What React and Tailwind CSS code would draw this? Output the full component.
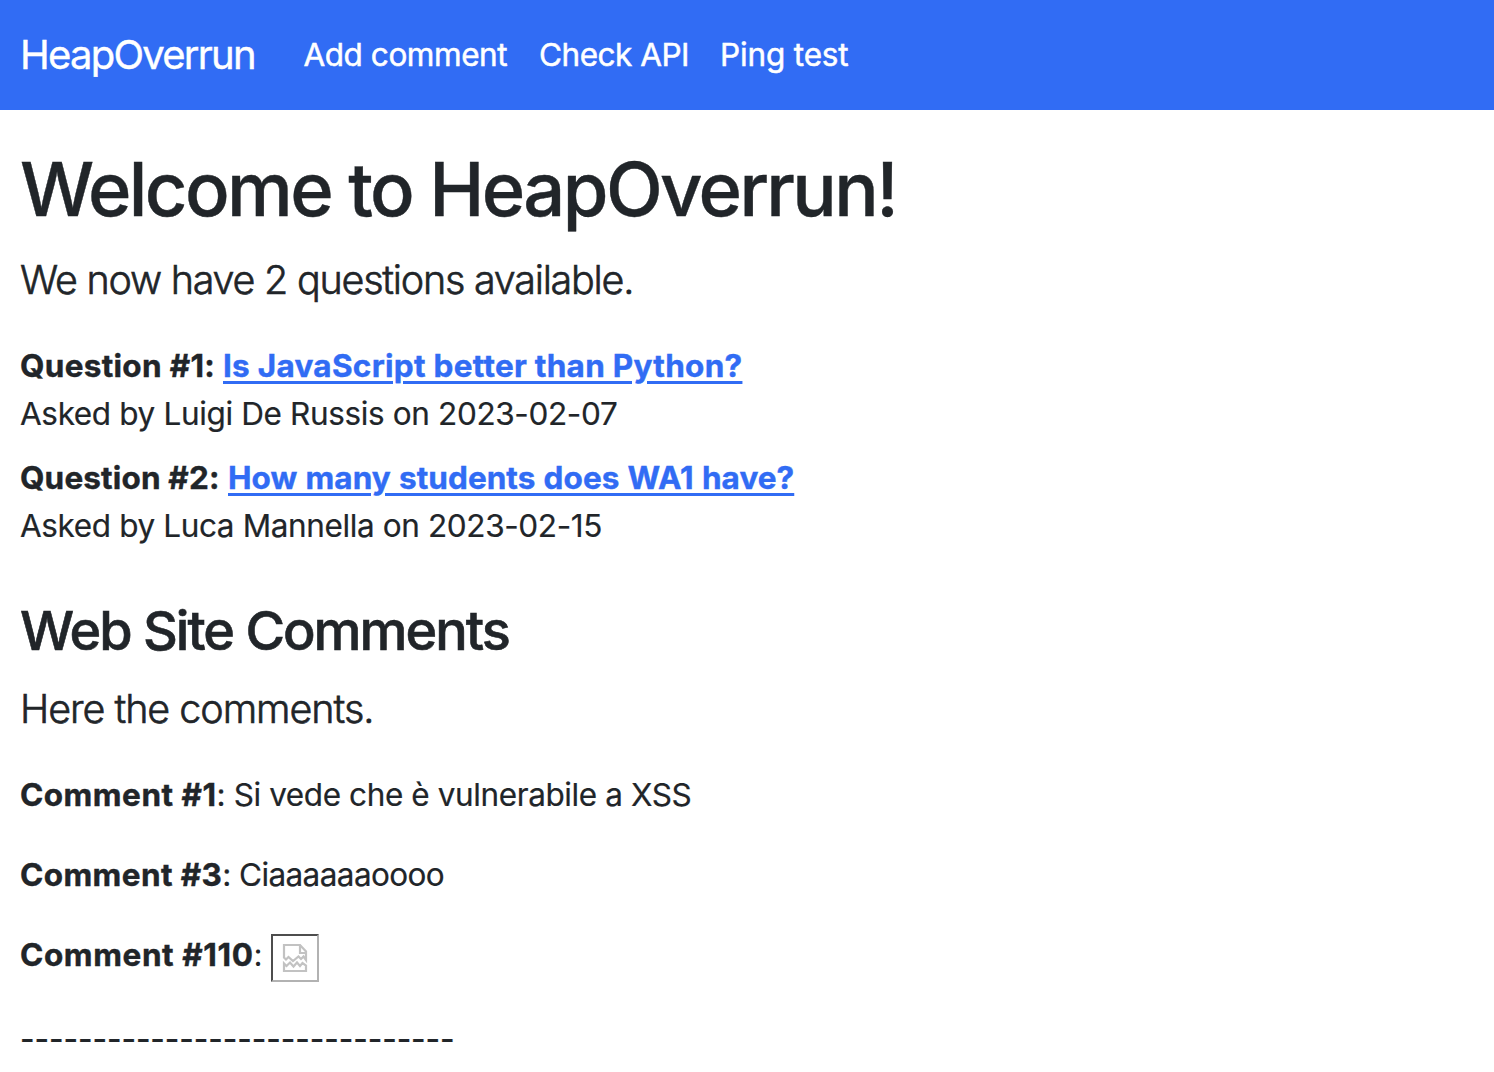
function NavLink({ className = "", children }) {
  return (
    <a href="#" className={"whitespace-nowrap [-webkit-text-stroke:0.5px_currentColor] " + className}>
      {children}
    </a>
  );
}

function Question({ label, labelClass = "", title, titleClass = "", asked, askedClass = "" }) {
  return (
    <li>
      <div className="flex font-bold [-webkit-text-stroke:0.4px_currentColor]">
        <span className={"whitespace-nowrap " + labelClass}>{label}</span>
        <a
          href="#"
          className={
            "whitespace-nowrap text-[#316cf4] underline decoration-[3px] underline-offset-[4px] " + titleClass
          }
        >
          {title}
        </a>
      </div>
      <p className={"whitespace-nowrap [-webkit-text-stroke:0.2px_currentColor] " + askedClass}>{asked}</p>
    </li>
  );
}

function CommentLabel({ className = "", children }) {
  return <b className={"font-bold [-webkit-text-stroke:0.4px_currentColor] " + className}>{children}</b>;
}

function BrokenImage() {
  return (
    <svg width="48" height="48" viewBox="0 0 48 48" className="mt-[3px] block shrink-0">
      <path d="M48 0V48H0L2 46H46V2Z" fill="#b2b2b2" />
      <path d="M0 48V0H48L46 2H2V46Z" fill="#4d4d4d" />
      <g fill="none" stroke="#c2c2c2" strokeWidth="2.2">
        <path d="M13 23.5V11H29L35 17.5V26L32.5 22.5L30 25L27.5 22.5L22 27L17.5 23L15 25.5Z" />
        <path d="M29 11V19H35" />
        <path d="M13 37V29.5L15.5 32L19 28.5L22.5 32.5L26 28.5L29 32L31.5 29L35 31.5V37Z" />
      </g>
    </svg>
  );
}

export default function App() {
  return (
    <div className="h-[1072px] w-full overflow-hidden bg-white font-['Inter',sans-serif] text-[31.5px] leading-[48px] text-[#212529]">
      <nav className="flex h-[110px] items-center bg-[#316cf4] pl-[20px] text-white">
        <a
          href="#"
          className="w-[283.5px] text-[40px] leading-[60px] tracking-[-1.75px] [-webkit-text-stroke:0.4px_currentColor]"
        >
          HeapOverrun
        </a>
        <NavLink className="w-[235.5px] tracking-[-0.45px]">Add comment</NavLink>
        <NavLink className="w-[181px] tracking-[-0.5px]">Check API</NavLink>
        <NavLink className="tracking-[-0.15px]">Ping test</NavLink>
      </nav>
      <main className="pl-[20px]">
        <h1 className="mt-[31px] text-[74px] leading-[96px] font-medium tracking-[-2.6px] [-webkit-text-stroke:0.4px_currentColor]">
          Welcome to HeapOverrun!
        </h1>
        <p className="mt-[13px] text-[39.5px] leading-[60px] font-light tracking-[-1.24px] [-webkit-text-stroke:0.6px_currentColor]">
          We now have 2 questions available.
        </p>
        <ul className="mt-[32px] flex flex-col gap-4">
          <Question
            label="Question #1:"
            labelClass="w-[203px] tracking-[0.3px]"
            title="Is JavaScript better than Python?"
            titleClass="tracking-[0.28px]"
            asked="Asked by Luigi De Russis on 2023-02-07"
            askedClass="tracking-[-0.36px]"
          />
          <Question
            label="Question #2:"
            labelClass="w-[208px] tracking-[0.15px]"
            title="How many students does WA1 have?"
            titleClass="tracking-[0.05px] [word-spacing:0.7px]"
            asked="Asked by Luca Mannella on 2023-02-15"
            askedClass="tracking-[-0.38px]"
          />
        </ul>
        <h2 className="mt-[48px] text-[54px] leading-[66px] font-medium tracking-[-2px] [-webkit-text-stroke:0.6px_currentColor]">
          Web Site Comments
        </h2>
        <p className="mt-[15px] text-[39.5px] leading-[60px] font-light tracking-[-1.05px] [-webkit-text-stroke:0.6px_currentColor]">
          Here the comments.
        </p>
        <p className="mt-[32px] tracking-[-0.4px] [-webkit-text-stroke:0.2px_currentColor]">
          <CommentLabel className="tracking-[0.5px]">Comment #1</CommentLabel>: Si vede che è vulnerabile a XSS
        </p>
        <p className="mt-[32px] tracking-[-0.6px] [-webkit-text-stroke:0.2px_currentColor]">
          <CommentLabel className="tracking-[0.4px]">Comment #3</CommentLabel>: Ciaaaaaaoooo
        </p>
        <div className="mt-[32px] flex h-[52px]">
          <p className="w-[251px]">
            <CommentLabel className="tracking-[0.6px]">Comment #110</CommentLabel>:
          </p>
          <BrokenImage />
        </div>
        <p className="mt-[32px] font-medium tracking-[-0.08px] [-webkit-text-stroke:0.2px_currentColor]">
          ------------------------------
        </p>
      </main>
    </div>
  );
}
